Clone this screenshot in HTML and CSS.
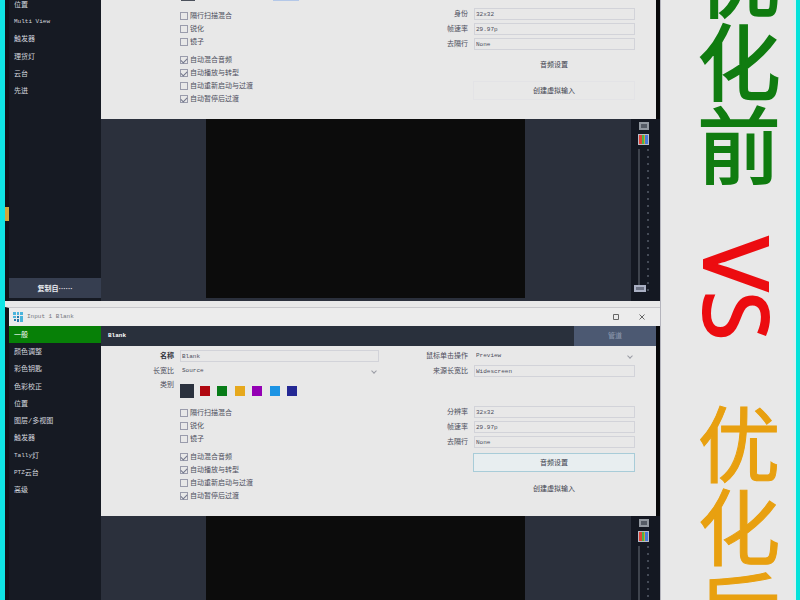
FILE: index.html
```html
<!DOCTYPE html>
<html lang="zh-CN">
<head>
<meta charset="utf-8">
<title>优化前 VS 优化后</title>
<link rel="stylesheet" href="styles.css">
</head>
<body>
<div class="frame">
  <main class="stack">
    <section class="window window-before">
      <div class="body">
        <div class="edge"><span class="edge-mark"></span></div>
        <aside class="sidebar">
          <nav class="nav">
            <a href="#">位置</a>
            <a href="#"><span class="latin">Multi View</span></a>
            <a href="#">触发器</a>
            <a href="#">理货灯</a>
            <a href="#">云台</a>
            <a href="#">先进</a>
          </nav>
          <button class="copy" type="button">复制自……</button>
        </aside>
        <div class="content">
          <form class="panel">
            <div class="col-left">
              <div class="swatch-edge"><i></i><i></i></div>
              <div class="checks">
                <label><input type="checkbox">隔行扫描混合</label>
                <label><input type="checkbox">锐化</label>
                <label><input type="checkbox">镜子</label>
              </div>
              <div class="checks">
                <label><input type="checkbox" checked>自动混合音频</label>
                <label><input type="checkbox" checked>自动播放与转型</label>
                <label><input type="checkbox">自动重新启动与过渡</label>
                <label><input type="checkbox" checked>自动暂停后过渡</label>
              </div>
            </div>
            <div class="col-right">
              <div class="info">
                <div class="field"><label for="a1">身份</label><input id="a1" value="32x32" readonly></div>
                <div class="field"><label for="a2">帧速率</label><input id="a2" value="29.97p" readonly></div>
                <div class="field"><label for="a3">去隔行</label><input id="a3" value="None" readonly></div>
              </div>
              <div class="actions">
                <button type="button">音频设置</button>
                <button type="button" class="faint">创建虚拟输入</button>
              </div>
            </div>
          </form>
          <div class="stage">
            <div class="video"></div>
            <div class="mixer">
              <svg class="monitor" viewBox="0 0 10 8"><rect width="10" height="8" fill="#9298a0"/><rect x="2" y="2" width="6" height="4" fill="#555b65"/></svg>
              <svg class="bars" viewBox="0 0 11 11"><rect width="11" height="11" fill="#b8bcc8"/><path fill="#e04438" d="M1 1h3v9H1z"/><path fill="#48b848" d="M4 1h3v9H4z"/><path fill="#d8a030" d="M6 1h1v9H6z"/><path fill="#4878d8" d="M7 1h3v9H7z"/></svg>
              <div class="fader"><span class="track"></span><span class="ticks"></span><span class="knob"></span></div>
            </div>
          </div>
        </div>
      </div>
    </section>

    <section class="window window-after">
      <header class="titlebar">
        <svg class="logo" viewBox="0 0 10 10"><path fill="#4bb4dc" d="M0 0h3v3H0zM4 0h2v3H4zM7 0h3v3H7zM0 4h3v2H0zM7 4h3v6H7z"/><path fill="#2878a8" d="M4 4h2v2H4zM1 7h2v2H1zM4 7h2v3H4z"/></svg>
        <span class="title latin">Input 1 Blank</span>
        <button type="button" aria-label="最大化"><svg viewBox="0 0 8 8"><path d="M1.500 1.500h5v5h-5z"/></svg></button>
        <button type="button" aria-label="关闭"><svg viewBox="0 0 8 8"><path d="M1.500 1.500l5 5m0-5l-5 5"/></svg></button>
      </header>
      <div class="body">
        <div class="edge"></div>
        <aside class="sidebar">
          <nav class="nav">
            <a href="#" class="active">一般</a>
            <a href="#">颜色调整</a>
            <a href="#">彩色钥匙</a>
            <a href="#">色彩校正</a>
            <a href="#">位置</a>
            <a href="#">图层/多视图</a>
            <a href="#">触发器</a>
            <a href="#"><span class="latin">Tally</span>灯</a>
            <a href="#"><span class="latin">PTZ</span>云台</a>
            <a href="#">高级</a>
          </nav>
        </aside>
        <div class="content">
          <div class="heading"><h2>Blank</h2><button type="button">管道</button></div>
          <form class="panel">
            <div class="col-left">
              <div class="general">
                <div class="field"><label class="strong" for="b1">名称</label><input id="b1" value="Blank"></div>
                <div class="field bare"><label for="b2">长宽比</label><select id="b2"><option>Source</option></select></div>
                <div class="field category"><span>类别</span>
                  <div class="swatches"><i class="slate"></i><i class="red"></i><i class="green"></i><i class="amber"></i><i class="purple"></i><i class="blue"></i><i class="navy"></i></div>
                </div>
              </div>
              <div class="checks">
                <label><input type="checkbox">隔行扫描混合</label>
                <label><input type="checkbox">锐化</label>
                <label><input type="checkbox">镜子</label>
              </div>
              <div class="checks">
                <label><input type="checkbox" checked>自动混合音频</label>
                <label><input type="checkbox" checked>自动播放与转型</label>
                <label><input type="checkbox">自动重新启动与过渡</label>
                <label><input type="checkbox" checked>自动暂停后过渡</label>
              </div>
            </div>
            <div class="col-right">
              <div class="general">
                <div class="field bare"><label for="c1">鼠标单击操作</label><select id="c1"><option>Preview</option></select></div>
                <div class="field"><label for="c2">来源长宽比</label><input id="c2" value="Widescreen" readonly></div>
              </div>
              <div class="info">
                <div class="field"><label for="c3">分辨率</label><input id="c3" value="32x32" readonly></div>
                <div class="field"><label for="c4">帧速率</label><input id="c4" value="29.97p" readonly></div>
                <div class="field"><label for="c5">去隔行</label><input id="c5" value="None" readonly></div>
              </div>
              <div class="actions">
                <button type="button" class="focus">音频设置</button>
                <button type="button">创建虚拟输入</button>
              </div>
            </div>
          </form>
          <div class="stage">
            <div class="video"></div>
            <div class="mixer">
              <svg class="monitor" viewBox="0 0 10 8"><rect width="10" height="8" fill="#9298a0"/><rect x="2" y="2" width="6" height="4" fill="#555b65"/></svg>
              <svg class="bars" viewBox="0 0 11 11"><rect width="11" height="11" fill="#b8bcc8"/><path fill="#e04438" d="M1 1h3v9H1z"/><path fill="#48b848" d="M4 1h3v9H4z"/><path fill="#d8a030" d="M6 1h1v9H6z"/><path fill="#4878d8" d="M7 1h3v9H7z"/></svg>
              <div class="fader"><span class="track"></span><span class="ticks"></span></div>
            </div>
          </div>
        </div>
      </div>
    </section>
  </main>
  <aside class="banner"><p><span class="before">优化前</span><span class="versus">VS</span><span class="after">优化后</span></p></aside>
</div>
</body>
</html>
```
FILE: styles.css
```css
* { box-sizing: border-box; }
body {
  margin: 0;
  height: 100vh;
  overflow: hidden;
  background: #e8e8e8;
  color: #4c4e5c;
  font: 7px/10px "Liberation Mono", "Noto Sans CJK SC", sans-serif;
}
button, input, select {
  font: inherit;
  color: inherit;
  margin: 0;
  padding: 0;
  border: 0;
  border-radius: 0;
  background: none;
}
a { color: inherit; text-decoration: none; }
svg { display: block; }
.latin { font-size: 6px; }

.frame {
  display: flex;
  height: 100%;
  border-left: 5px solid #10e4e4;
  border-right: 4px solid #00e2da;
}
.stack {
  flex: 1;
  min-width: 0;
  display: flex;
  flex-direction: column;
  gap: 6px;
}
.window { display: flex; flex-direction: column; min-height: 0; }
.window-before { flex: 301; }
.window-after { flex: 293; }
.body { flex: 1; display: flex; min-height: 0; background: #161a23; }

.edge { width: 4px; background: #111319; }
.edge-mark { display: block; height: 14px; margin-top: 207px; background: #d0a63c; }
.sidebar {
  width: 92px;
  display: flex;
  flex-direction: column;
  justify-content: space-between;
  background: #161a23;
  color: #d4d7df;
}
.nav { display: grid; grid-auto-rows: 1fr; height: 173px; }
.window-before .nav { height: 104px; margin-top: -4px; }
.nav a { display: flex; align-items: center; padding-left: 5px; }
.nav .active { background: #078007; color: #fff; }
.copy {
  height: 20px;
  margin-bottom: 3px;
  background: #363e50;
  color: #eceef2;
  font-family: "Noto Sans CJK SC", sans-serif;
  font-weight: bold;
}

.titlebar {
  display: flex;
  align-items: center;
  height: 19px;
  padding: 0 14px 0 4px;
  gap: 4px;
  border-left: 4px solid #111319;
  border-top: 1px solid #c8c8cc;
  background: #ececec;
  color: #74767c;
}
.logo { width: 10px; height: 10px; }
.title { flex: 1; }
.titlebar button { width: 8px; margin-left: 14px; }
.titlebar button svg { width: 8px; height: 8px; fill: none; stroke: #666; }

.content { flex: 1; min-width: 0; display: flex; flex-direction: column; }
.heading, .panel { border-right: 4px solid #07080a; }
.heading { display: flex; height: 20px; background: #29303c; color: #fff; }
.heading h2 { flex: 1; margin: 0; padding-left: 7px; font: bold 6px/20px "Liberation Mono", monospace; }
.heading button { width: 82px; background: #4c5972; color: #8f9bb0; }
.panel {
  display: flex;
  justify-content: space-between;
  height: 170px;
  padding: 4px 21px 0 48px;
  background: #e8e8e8;
}
.window-before .panel { height: 119px; padding-top: 0; }
.col-left { width: 230px; }
.col-right { width: 220px; }

.field { position: relative; display: flex; height: 12px; margin-bottom: 3px; align-items: center; gap: 6px; }
.col-left .field label, .category > span { width: 25px; text-align: right; }
.col-right .field label { width: 53px; text-align: right; }
.field input, .field select {
  flex: 1;
  min-width: 0;
  height: 12px;
  padding-left: 1px;
  border: 1px solid #d2d3d9;
  font-size: 6px;
}
.field select { appearance: none; border-color: transparent; }
.bare::after {
  content: "";
  width: 3px;
  height: 3px;
  position: absolute;
  right: 3px;
  top: 4px;
  border: solid #999ca4;
  border-width: 0 1px 1px 0;
  transform: rotate(45deg);
}
.strong { font-weight: bold; color: #30323c; }
.general { height: 56px; }
.field.category { height: 22px; }
.category > span { align-self: flex-start; }
.swatches { display: flex; align-items: center; justify-content: space-between; width: 117px; }
.swatches i { width: 10px; height: 10px; }
.swatches .slate { width: 14px; height: 14px; margin-right: -2px; background: #2b323e; }
.red { background: #b00810; }
.green { background: #087c18; }
.amber { background: #e6a81c; }
.purple { background: #9400b4; }
.blue { background: #1c94e4; }
.navy { background: #242894; }
.swatch-edge { display: flex; height: 9px; padding-left: 32px; gap: 78px; }
.swatch-edge i { width: 14px; height: 1px; background: #4c515c; }
.swatch-edge i + i { width: 26px; background: #b4c8e8; }

.checks { padding-left: 31px; margin-bottom: 5px; }
.checks label { display: flex; align-items: center; height: 13px; gap: 2px; }
.checks input {
  appearance: none;
  width: 8px;
  height: 8px;
  border: 1px solid #9a9cac;
}
.checks input:checked::after {
  content: "";
  display: block;
  width: 5px;
  height: 3px;
  margin-top: 1px;
  border: solid #74788c;
  border-width: 0 0 1px 1px;
  transform: rotate(-45deg);
}
.window-before .info { padding-top: 8px; }
.actions { margin-left: 58px; display: grid; gap: 7px; padding-top: 2px; }
.actions button { height: 19px; color: #3c3e4c; border: 1px solid transparent; }
.actions .focus { border-color: #a8ccd8; background: #e8eef0; }
.actions .faint { border-color: #e3e3e6; }

.stage { flex: 1; min-height: 0; display: flex; background: #2b303c; }
.video { flex: 1; margin: 0 106px 0 105px; background: #0c0c0c; }
.window-before .video { margin-bottom: 3px; }
.mixer {
  width: 29px;
  display: flex;
  flex-direction: column;
  align-items: center;
  padding: 3px 4px 0 0;
  gap: 4px;
  background: #141822;
}
.monitor { width: 10px; height: 8px; }
.bars { width: 11px; height: 11px; }
.fader { flex: 1; position: relative; display: flex; gap: 7px; margin-bottom: 9px; }
.window-after .fader { margin-bottom: 0; }
.track { width: 2px; background: #3e434d; }
.ticks { width: 2px; background: repeating-linear-gradient(#444a56 0 2px, transparent 2px 7px); }
.knob {
  position: absolute;
  left: -4px;
  bottom: 0;
  width: 12px;
  height: 7px;
  border: 2px solid #aab0c4;
  background: #6c7284;
}

.banner {
  display: flex;
  justify-content: center;
  width: 136px;
  padding-left: 24px;
  border-left: 1px solid #b4b4bc;
  border-right: 3px solid #d8eeee;
  overflow: hidden;
}
.banner p {
  margin: -62px 0 0;
  writing-mode: vertical-rl;
  white-space: nowrap;
  font: 83px/88px "Noto Sans CJK SC", sans-serif;
}
.before { color: #107c10; -webkit-text-stroke: 2px #107c10; }
.versus {
  margin: 50px 0 63px;
  color: #ec0c10;
  font-family: "Noto Sans", sans-serif;
  font-size: 90px;
  -webkit-text-stroke: 2px #ec0c10;
}
.after { color: #e8a010; -webkit-text-stroke: 1px #e8a010; }
```
